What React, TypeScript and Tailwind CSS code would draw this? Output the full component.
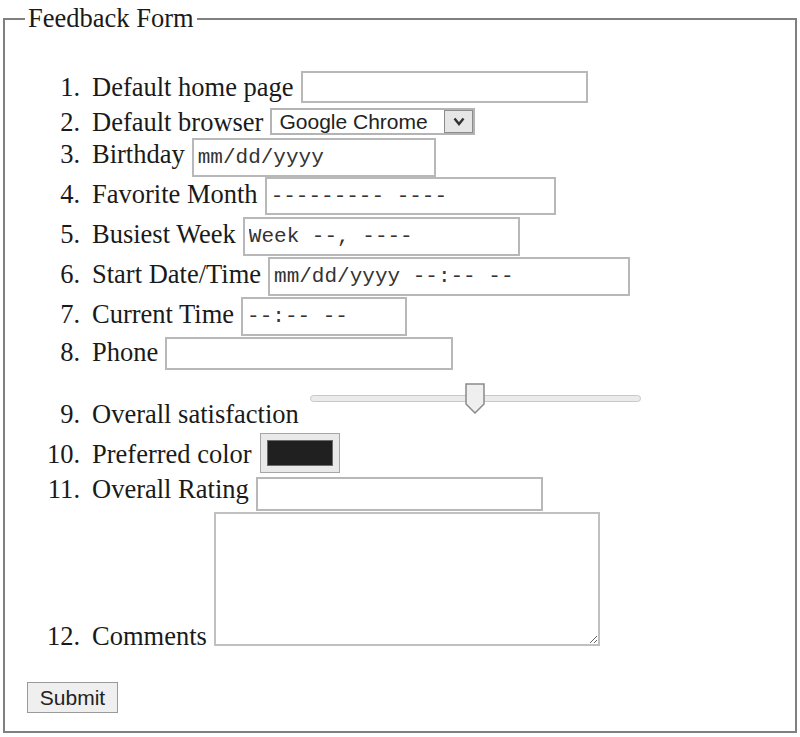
import React from 'react';

const serif = "font-['Liberation_Serif',serif]";
const field = 'border-2 border-[#b8b8b8] bg-white text-[#333] outline-none';
const mono = "font-['Liberation_Mono',monospace] text-[21px] pl-[4px]";
const sans = "font-['Liberation_Sans',Arial,sans-serif] text-[21px]";

const Label: React.FC<{ n: number; text: string; className?: string }> = ({ n, text, className = '' }) => (
  <span className={`shrink-0 whitespace-nowrap leading-[20px] ${className}`}>
    <span className="inline-block w-[55px] text-right">{n}.</span>
    <span className="pl-[12px]">{text}</span>
  </span>
);

const Row: React.FC<{ className: string; children: React.ReactNode }> = ({ className, children }) => (
  <li className={`flex items-start gap-[7px] ${className}`}>{children}</li>
);

const Slider: React.FC = () => (
  <div className="relative ml-[4px] mt-[12px] h-[30px] w-[331px]">
    <div className="mt-[12px] h-[7px] rounded-full border border-[#c8c8c8] bg-[#ebebeb]" />
    <svg className="absolute left-[155px] top-0" width="20" height="31" viewBox="0 0 20 31">
      <path d="M1 1H19V21L10 30L1 21Z" fill="#efefef" stroke="#8a8a8a" strokeWidth="1.5" />
    </svg>
  </div>
);

export default function App() {
  return (
    <div className={`bg-white pb-[4px] pt-[4px] text-[26.5px] text-[#1a1a1a] ${serif}`}>
      <fieldset className="mx-[3px] border-2 border-[#808080] pb-[14px] pl-[20px] pr-0 pt-[38px]">
        <legend className="px-[3px] leading-[29px]">Feedback Form</legend>
        <ol>
          <Row className="h-[37px]">
            <Label n={1} text="Default home page" className="mt-[6px]" />
            <input type="text" className={`h-[32px] w-[287px] ${field} ${sans}`} />
          </Row>
          <Row className="h-[30px]">
            <Label n={2} text="Default browser" className="mt-[4px]" />
            <div className={`flex h-[27px] w-[205px] border-2 border-[#b4b4b4] bg-white ${sans}`}>
              <span className="flex-1 pl-[7px] leading-[23px] text-[#222]">Google Chrome</span>
              <span className="flex w-[29px] items-center justify-center border border-[#8c8c8c] bg-[#e6e6e6]">
                <svg width="12" height="9" viewBox="0 0 12 9">
                  <path d="M1.5 1.5L6 7L10.5 1.5" fill="none" stroke="#333" strokeWidth="2.4" />
                </svg>
              </span>
            </div>
          </Row>
          <Row className="h-[39px]">
            <Label n={3} text="Birthday" className="mt-[6px]" />
            <input type="text" readOnly defaultValue="mm/dd/yyyy" className={`h-[39px] w-[244px] ${field} ${mono}`} />
          </Row>
          <Row className="h-[40px]">
            <Label n={4} text="Favorite Month" className="mt-[7px]" />
            <input type="text" readOnly defaultValue="--------- ----" className={`h-[38px] w-[291px] ${field} ${mono}`} />
          </Row>
          <Row className="h-[40px]">
            <Label n={5} text="Busiest Week" className="mt-[7px]" />
            <input type="text" readOnly defaultValue="Week --, ----" className={`h-[39px] w-[277px] ${field} ${mono}`} />
          </Row>
          <Row className="h-[40px]">
            <Label n={6} text="Start Date/Time" className="mt-[7px]" />
            <input type="text" readOnly defaultValue="mm/dd/yyyy --:-- --" className={`h-[39px] w-[362px] ${field} ${mono}`} />
          </Row>
          <Row className="h-[40px]">
            <Label n={7} text="Current Time" className="mt-[7px]" />
            <input type="text" readOnly defaultValue="--:-- --" className={`h-[39px] w-[166px] ${field} ${mono}`} />
          </Row>
          <Row className="h-[34px]">
            <Label n={8} text="Phone" className="mt-[5px]" />
            <input type="tel" className={`h-[33px] w-[288px] ${field} ${sans}`} />
          </Row>
          <Row className="h-[62px]">
            <Label n={9} text="Overall satisfaction" className="mt-[33px]" />
            <Slider />
          </Row>
          <Row className="h-[44px]">
            <Label n={10} text="Preferred color" className="mt-[11px]" />
            <div className="ml-[1px] flex h-[40px] w-[80px] items-center justify-center border border-[#a6a6a6] bg-[#e9e9e9]">
              <div className="h-[26px] w-[66px] border border-[#6b6b6b] bg-[#202020]" />
            </div>
          </Row>
          <Row className="h-[35px]">
            <Label n={11} text="Overall Rating" className="mt-[2px]" />
            <input type="text" className={`h-[34px] w-[287px] ${field} ${sans}`} />
          </Row>
          <Row className="h-[139px]">
            <Label n={12} text="Comments" className="mt-[114px]" />
            <textarea className="h-[134px] w-[386px] border-2 border-[#c0c0c0] bg-white outline-none" />
          </Row>
        </ol>
        <button
          type="submit"
          className={`ml-[2px] mt-[31px] h-[31px] w-[91px] border border-[#9a9a9a] bg-[#efefef] leading-none text-[#222] ${sans}`}
        >
          Submit
        </button>
      </fieldset>
    </div>
  );
}
